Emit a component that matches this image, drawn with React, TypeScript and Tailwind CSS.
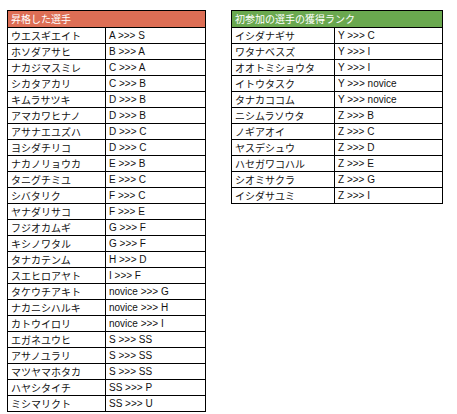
const promoted: [string, string][] = [
  ["ウエスギエイト", "A >>> S"],
  ["ホソダアサヒ", "B >>> A"],
  ["ナカジマスミレ", "C >>> A"],
  ["シカタアカリ", "C >>> B"],
  ["キムラサツキ", "D >>> B"],
  ["アマカワヒナノ", "D >>> B"],
  ["アサナエユズハ", "D >>> C"],
  ["ヨシダチリコ", "D >>> C"],
  ["ナカノリョウカ", "E >>> B"],
  ["タニグチミユ", "E >>> C"],
  ["シバタリク", "F >>> C"],
  ["ヤナダリサコ", "F >>> E"],
  ["フジオカムギ", "G >>> F"],
  ["キシノワタル", "G >>> F"],
  ["タナカテンム", "H >>> D"],
  ["スエヒロアヤト", "I >>> F"],
  ["タケウチアキト", "novice >>> G"],
  ["ナカニシハルキ", "novice >>> H"],
  ["カトウイロリ", "novice >>> I"],
  ["エガネユウヒ", "S >>> SS"],
  ["アサノユラリ", "S >>> SS"],
  ["マツヤマホタカ", "S >>> SS"],
  ["ハヤシタイチ", "SS >>> P"],
  ["ミシマリクト", "SS >>> U"],
]

const newcomers: [string, string][] = [
  ["イシダナギサ", "Y >>> C"],
  ["ワタナベスズ", "Y >>> I"],
  ["オオトミショウタ", "Y >>> I"],
  ["イトウタスク", "Y >>> novice"],
  ["タナカココム", "Y >>> novice"],
  ["ニシムラソウタ", "Z >>> B"],
  ["ノギアオイ", "Z >>> C"],
  ["ヤスデシュウ", "Z >>> D"],
  ["ハセガワコハル", "Z >>> E"],
  ["シオミサクラ", "Z >>> G"],
  ["イシダサユミ", "Z >>> I"],
]

function Sheet(props: { title: string; head: string; rows: [string, string][]; c1: string; c2: string }) {
  return (
    <div className="border border-black bg-white">
      <div
        className={`h-[16px] flex items-center pl-[3px] text-white text-[10px] leading-none ${props.head}`}
        style={{ fontFamily: '"Noto Sans CJK JP", sans-serif' }}
      >
        {props.title}
      </div>
      {props.rows.map((r, i) => (
        <div key={i} className="flex h-[16px] border-t border-black text-[10px] leading-none text-[#111]">
          <div
            className={`${props.c1} flex items-center pl-[3px] border-r border-black`}
            style={{ fontFamily: '"Noto Sans CJK JP", sans-serif' }}
          >
            {r[0]}
          </div>
          <div
            className={`${props.c2} flex items-center pl-[3px]`}
            style={{ fontFamily: '"Liberation Sans", Arial, sans-serif' }}
          >
            {r[1]}
          </div>
        </div>
      ))}
    </div>
  )
}

export default function App() {
  return (
    <div className="w-[457px] h-[414px] bg-white flex items-start gap-[25px] pt-[10px] pl-[7px]">
      <div className="w-[199px]">
        <Sheet title="昇格した選手" head="bg-[#dd6e55]" rows={promoted} c1="w-[98px]" c2="w-[99px]" />
      </div>
      <div className="w-[212px]">
        <Sheet title="初参加の選手の獲得ランク" head="bg-[#6aa84f]" rows={newcomers} c1="w-[103px]" c2="w-[107px]" />
      </div>
    </div>
  )
}
